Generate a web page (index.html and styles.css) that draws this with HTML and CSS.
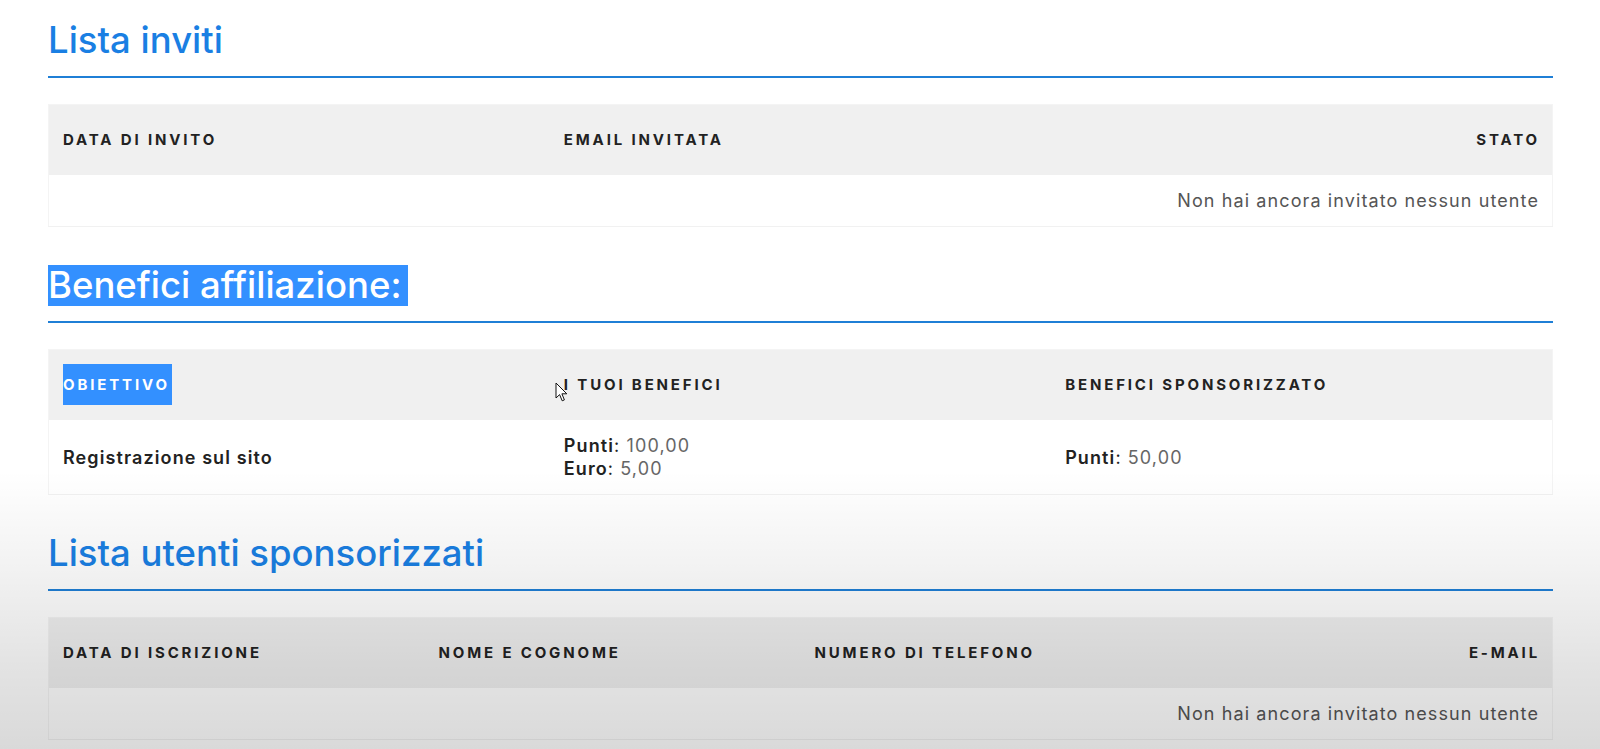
FILE: index.html
```html
<!DOCTYPE html>
<html lang="it">
<head>
<meta charset="utf-8">
<title>Affiliazione</title>
<link rel="stylesheet" href="styles.css">
</head>
<body>
<main class="page">
  <section class="block">
    <h2 class="title">Lista inviti</h2>
    <table class="tbl">
      <colgroup><col class="c3"><col class="c3"><col class="c3"></colgroup>
      <thead>
        <tr><th>Data di invito</th><th>Email invitata</th><th class="right">Stato</th></tr>
      </thead>
      <tbody>
        <tr><td colspan="3" class="right muted">Non hai ancora invitato nessun utente</td></tr>
      </tbody>
    </table>
  </section>

  <section class="block">
    <h2 class="title"><span class="sel sel-title">Benefici affiliazione: </span></h2>
    <table class="tbl">
      <colgroup><col class="c3"><col class="c3"><col class="c3"></colgroup>
      <thead>
        <tr><th><span class="sel sel-th">Obiettivo</span></th><th>I tuoi benefici</th><th>Benefici sponsorizzato</th></tr>
      </thead>
      <tbody>
        <tr>
          <td class="strong">Registrazione sul sito</td>
          <td><b>Punti</b>: <span class="val">100,00</span><br><b>Euro</b>: <span class="val">5,00</span></td>
          <td><b>Punti</b>: <span class="val">50,00</span></td>
        </tr>
      </tbody>
    </table>
  </section>

  <section class="block">
    <h2 class="title">Lista utenti sponsorizzati</h2>
    <table class="tbl">
      <colgroup><col class="c4"><col class="c4"><col class="c4"><col class="c4"></colgroup>
      <thead>
        <tr><th>Data di iscrizione</th><th>Nome e cognome</th><th>Numero di telefono</th><th class="right">E-mail</th></tr>
      </thead>
      <tbody>
        <tr><td colspan="4" class="right muted">Non hai ancora invitato nessun utente</td></tr>
      </tbody>
    </table>
  </section>
</main>
<div class="shade"></div>
<svg class="cursor" width="13" height="21" viewBox="0 0 13 21" aria-hidden="true">
  <path d="M1 1 L1 16 L4.6 12.6 L7.2 18.8 L9.4 17.9 L6.9 11.8 L11.8 11.8 Z" fill="#fff" stroke="#111" stroke-width="1" stroke-linejoin="round"/>
</svg>
</body>
</html>
```
FILE: styles.css
```css
html, body {
  margin: 0;
  padding: 0;
  background: #ffffff;
}
body {
  font-family: "Inter", "Open Sans", sans-serif;
  color: #222;
  position: relative;
  height: 749px;
  overflow: hidden;
}
.page {
  padding: 20px 47px 0 48px;
}
.block {
  margin-bottom: 38px;
}
.title {
  margin: 0;
  font-size: 36.5px;
  font-weight: 500;
  line-height: 41px;
  color: #1a7fe3;
  padding-bottom: 15px;
  border-bottom: 2px solid #1f7fd6;
  margin-bottom: 26px;
}
.sel {
  background: #3390ff;
  color: #fff;
  display: inline-block;
}
.sel-title {
  line-height: 41px;
  padding-right: 7px;
}
.sel-th {
  line-height: 41px;
  padding-right: 2px;
}
.tbl {
  width: 100%;
  border-collapse: collapse;
  table-layout: fixed;
  border: 1px solid #f4f4f4;
}
.tbl th {
  background: #f0f0f0;
  text-align: left;
  font-size: 15px;
  font-weight: 700;
  letter-spacing: 2.85px;
  text-transform: uppercase;
  color: #222;
  padding: 14px 14px 15px;
  line-height: 41px;
  white-space: nowrap;
}
.tbl th.right { padding-right: 12px; }
.tbl td {
  padding: 14px 14px;
  line-height: 23px;
  font-size: 18px;
  letter-spacing: 1.1px;
  color: #222;
  border-bottom: 1px solid #f1f1f1;
}
.tbl .right { text-align: right; }
.tbl td.right { padding-right: 13px; }
.tbl td.muted { color: #555; font-weight: 400; }
.tbl td.strong { font-weight: 600; }
.tbl td b { font-weight: 600; }
.tbl .val { color: #666; }
.shade {
  position: absolute;
  left: 0; right: 0; top: 470px; bottom: 0;
  background: linear-gradient(to bottom, rgba(0,0,0,0) 0%, rgba(0,0,0,0.05) 35%, rgba(0,0,0,0.11) 70%, rgba(0,0,0,0.15) 100%);
  pointer-events: none;
}
.cursor {
  position: absolute;
  left: 555px;
  top: 382px;
}
```
